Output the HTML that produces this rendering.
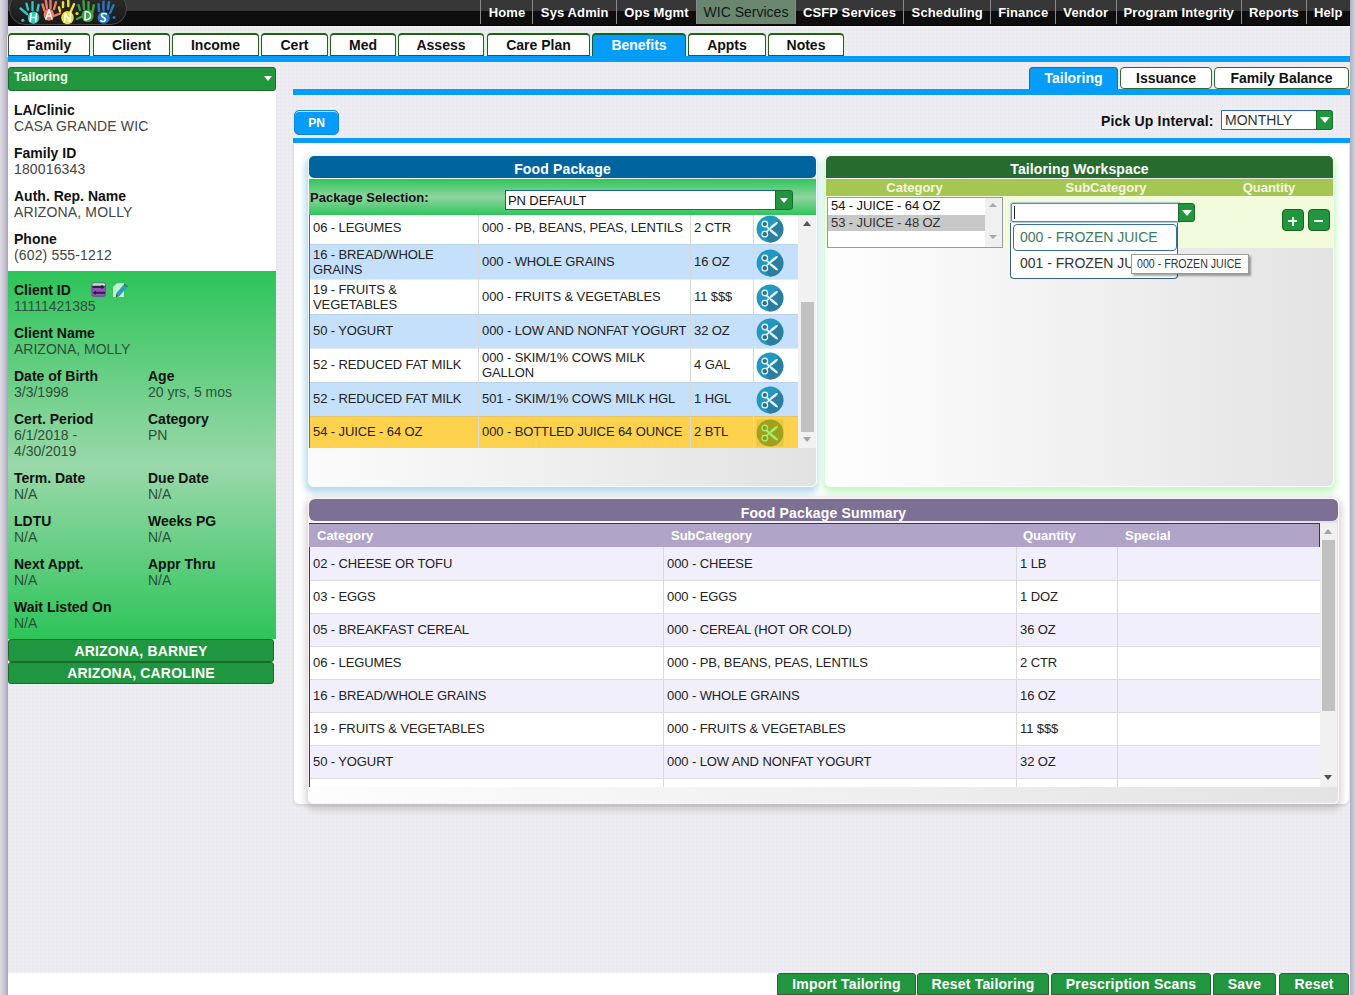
<!DOCTYPE html><html><head><meta charset="utf-8"><style>
html,body{margin:0;padding:0;}
body{width:1356px;height:995px;position:relative;overflow:hidden;background:#ecebf0;font-family:"Liberation Sans",sans-serif;}
.t{position:absolute;white-space:nowrap;}
.r{position:absolute;box-sizing:border-box;}
</style></head><body>
<div class="r" style="left:8px;top:25px;width:1342px;height:948px;background-color:#ebeaf0;background-image:radial-gradient(#f0eff4 0.8px, transparent 1px);background-size:4px 4px;background-position:1px 1px;"></div>
<div class="r" style="left:8px;top:973px;width:1342px;height:22px;background:#fff;"></div>
<div class="r" style="left:0px;top:0px;width:8px;height:995px;background:linear-gradient(to right,#dddbe3 0,#cfccd8 3px,#b9b5c8 6px,#a9a4bb 8px);"></div>
<div class="r" style="left:1350px;top:0px;width:6px;height:995px;background:linear-gradient(to right,#b3afc2 0,#c6c3d2 3px,#d9d7e0 6px);"></div>
<div class="r" style="left:8px;top:0px;width:1342px;height:26px;background:linear-gradient(#373737 0,#373737 11px,#0e0e0e 11px,#0e0e0e 25px,#000 25px);"></div>
<div class="r" style="left:8px;top:26px;width:1342px;height:1px;background:#f8f8fa;"></div>
<div class="r" style="left:9px;top:-8px;width:118px;height:33px;border-radius:16px;border:1px solid #4a4a4a;background:linear-gradient(#2e2e2e,#1a1a1a);"></div>
<svg style="position:absolute;left:0;top:0" width="130" height="25" viewBox="0 0 130 25"><g fill="#30c8c0" stroke="#30c8c0" stroke-linecap="round"><ellipse cx="33.5" cy="17.7" rx="5.7" ry="6.2" stroke="none"/><path d="M20.5 8.5 L27 14" stroke-width="2.4" fill="none"/><path d="M26.5 3.8 L28 9.5" stroke-width="2.4" fill="none"/><path d="M32.5 2.2 L32.5 10" stroke-width="2.4" fill="none"/><path d="M38.5 5 L37.5 10.5" stroke-width="2.4" fill="none"/><circle cx="22.8" cy="20.3" r="1.6" stroke="none"/></g><g fill="#e87a66" stroke="#e87a66" stroke-linecap="round"><ellipse cx="48.9" cy="14.8" rx="5.3" ry="6" stroke="none"/><path d="M42.5 4.5 L44.5 10.5" stroke-width="2.4" fill="none"/><path d="M45.8 0.5 L47 8" stroke-width="2.4" fill="none"/><path d="M50.5 0.5 L50.5 8" stroke-width="2.4" fill="none"/><path d="M56 2.2 L54 9" stroke-width="2.4" fill="none"/><path d="M60.2 13.3 L54 16" stroke-width="2.4" fill="none"/></g><g fill="#f0e030" stroke="#f0e030" stroke-linecap="round"><ellipse cx="67.5" cy="17.7" rx="6.3" ry="6.6" stroke="none"/><path d="M63 2.2 L63 7" stroke-width="2.4" fill="none"/><path d="M68.3 0.8 L68.3 6" stroke-width="2.4" fill="none"/><path d="M74 4.2 L70.5 12" stroke-width="2.4" fill="none"/><path d="M59 7.5 L60 11" stroke-width="2.4" fill="none"/><circle cx="77" cy="13.5" r="1.6" stroke="none"/></g><g fill="#3aa040" stroke="#3aa040" stroke-linecap="round"><ellipse cx="87.6" cy="15.7" rx="6.1" ry="6.3" stroke="none"/><path d="M78.5 5.2 L80 10" stroke-width="2.4" fill="none"/><path d="M83.5 1.2 L84 9" stroke-width="2.4" fill="none"/><path d="M88.5 2.2 L88.5 9" stroke-width="2.4" fill="none"/><path d="M93.8 5.2 L92.5 12" stroke-width="2.4" fill="none"/><path d="M77 19 L81 17" stroke-width="2.4" fill="none"/></g><g fill="#2a78c8" stroke="#2a78c8" stroke-linecap="round"><ellipse cx="103.7" cy="17.7" rx="6.1" ry="6.1" stroke="none"/><path d="M98.5 4.2 L99 11" stroke-width="2.4" fill="none"/><path d="M103.5 1.8 L103.5 10" stroke-width="2.4" fill="none"/><path d="M109 2.2 L108 9" stroke-width="2.4" fill="none"/><path d="M113.5 5.2 L110 13" stroke-width="2.4" fill="none"/><circle cx="114" cy="17.5" r="1.4" stroke="none"/></g><g fill="none" stroke="#f0fffa" stroke-width="1.6" stroke-linecap="round" stroke-linejoin="round"><path d="M31 13.5 L30.3 21.5 M36.5 13.5 L35.8 21.5 M30.7 17.5 L36.2 17.5"/><path d="M45.8 19 L49 10 L52 19 M46.9 16 L51 16"/><path d="M64.5 22 L65.3 13.5 L69.8 21.5 L70.6 13"/><path d="M85.3 11.5 L85 20 Q91 19.5 90.5 15.5 Q90 11.5 85.3 11.5"/><path d="M106.3 14 Q103.5 12.8 101.8 14.2 Q100.8 16 103 17.3 Q106 18.5 105.3 20.5 Q103.5 22.3 100.8 20.8"/></g>
</svg>
<div class="r" style="left:696px;top:0px;width:99px;height:24px;background:#6b866e;"></div>
<div class="r" style="left:480px;top:0px;width:1px;height:24px;background:#8a8a8a;"></div>
<div class="r" style="left:532px;top:0px;width:1px;height:24px;background:#8a8a8a;"></div>
<div class="r" style="left:616px;top:0px;width:1px;height:24px;background:#8a8a8a;"></div>
<div class="r" style="left:696px;top:0px;width:1px;height:24px;background:#8a8a8a;"></div>
<div class="r" style="left:795px;top:0px;width:1px;height:24px;background:#8a8a8a;"></div>
<div class="r" style="left:903px;top:0px;width:1px;height:24px;background:#8a8a8a;"></div>
<div class="r" style="left:990px;top:0px;width:1px;height:24px;background:#8a8a8a;"></div>
<div class="r" style="left:1055px;top:0px;width:1px;height:24px;background:#8a8a8a;"></div>
<div class="r" style="left:1116px;top:0px;width:1px;height:24px;background:#8a8a8a;"></div>
<div class="r" style="left:1241px;top:0px;width:1px;height:24px;background:#8a8a8a;"></div>
<div class="r" style="left:1306px;top:0px;width:1px;height:24px;background:#8a8a8a;"></div>
<div class="t" style="left:481.5px;top:6.00px;font-size:13px;line-height:13px;font-weight:bold;color:#fff;width:51.0px;text-align:center;letter-spacing:0.12px;">Home</div>
<div class="t" style="left:533.5px;top:6.00px;font-size:13px;line-height:13px;font-weight:bold;color:#fff;width:82.5px;text-align:center;letter-spacing:0.12px;">Sys Admin</div>
<div class="t" style="left:617px;top:6.00px;font-size:13px;line-height:13px;font-weight:bold;color:#fff;width:79px;text-align:center;letter-spacing:0.12px;">Ops Mgmt</div>
<div class="t" style="left:697px;top:4.95px;font-size:14px;line-height:14px;color:#0c1a18;width:98px;text-align:center;">WIC Services</div>
<div class="t" style="left:796px;top:6.00px;font-size:13px;line-height:13px;font-weight:bold;color:#fff;width:107px;text-align:center;letter-spacing:0.12px;">CSFP Services</div>
<div class="t" style="left:904px;top:6.00px;font-size:13px;line-height:13px;font-weight:bold;color:#fff;width:86.5px;text-align:center;letter-spacing:0.12px;">Scheduling</div>
<div class="t" style="left:991.5px;top:6.00px;font-size:13px;line-height:13px;font-weight:bold;color:#fff;width:63.5px;text-align:center;letter-spacing:0.12px;">Finance</div>
<div class="t" style="left:1056px;top:6.00px;font-size:13px;line-height:13px;font-weight:bold;color:#fff;width:59.5px;text-align:center;letter-spacing:0.12px;">Vendor</div>
<div class="t" style="left:1116.5px;top:6.00px;font-size:13px;line-height:13px;font-weight:bold;color:#fff;width:124.5px;text-align:center;letter-spacing:0.12px;">Program Integrity</div>
<div class="t" style="left:1242px;top:6.00px;font-size:13px;line-height:13px;font-weight:bold;color:#fff;width:64px;text-align:center;letter-spacing:0.12px;">Reports</div>
<div class="t" style="left:1307px;top:6.00px;font-size:13px;line-height:13px;font-weight:bold;color:#fff;width:42.5px;text-align:center;letter-spacing:0.12px;">Help</div>
<div class="r" style="left:8px;top:33px;width:82px;height:23px;background:#fff;border:1px solid #2d5a22;border-top:2px solid #2d5a22;border-radius:4px 4px 0 0;box-shadow:0 0 0 1px #dcf8dc;"></div>
<div class="t" style="left:8px;top:37.65px;font-size:14px;line-height:14px;font-weight:bold;color:#111;width:82px;text-align:center;">Family</div>
<div class="r" style="left:93px;top:33px;width:77px;height:23px;background:#fff;border:1px solid #2d5a22;border-top:2px solid #2d5a22;border-radius:4px 4px 0 0;box-shadow:0 0 0 1px #dcf8dc;"></div>
<div class="t" style="left:93px;top:37.65px;font-size:14px;line-height:14px;font-weight:bold;color:#111;width:77px;text-align:center;">Client</div>
<div class="r" style="left:172px;top:33px;width:87px;height:23px;background:#fff;border:1px solid #2d5a22;border-top:2px solid #2d5a22;border-radius:4px 4px 0 0;box-shadow:0 0 0 1px #dcf8dc;"></div>
<div class="t" style="left:172px;top:37.65px;font-size:14px;line-height:14px;font-weight:bold;color:#111;width:87px;text-align:center;">Income</div>
<div class="r" style="left:261px;top:33px;width:67px;height:23px;background:#fff;border:1px solid #2d5a22;border-top:2px solid #2d5a22;border-radius:4px 4px 0 0;box-shadow:0 0 0 1px #dcf8dc;"></div>
<div class="t" style="left:261px;top:37.65px;font-size:14px;line-height:14px;font-weight:bold;color:#111;width:67px;text-align:center;">Cert</div>
<div class="r" style="left:330px;top:33px;width:66px;height:23px;background:#fff;border:1px solid #2d5a22;border-top:2px solid #2d5a22;border-radius:4px 4px 0 0;box-shadow:0 0 0 1px #dcf8dc;"></div>
<div class="t" style="left:330px;top:37.65px;font-size:14px;line-height:14px;font-weight:bold;color:#111;width:66px;text-align:center;">Med</div>
<div class="r" style="left:398px;top:33px;width:86px;height:23px;background:#fff;border:1px solid #2d5a22;border-top:2px solid #2d5a22;border-radius:4px 4px 0 0;box-shadow:0 0 0 1px #dcf8dc;"></div>
<div class="t" style="left:398px;top:37.65px;font-size:14px;line-height:14px;font-weight:bold;color:#111;width:86px;text-align:center;">Assess</div>
<div class="r" style="left:487px;top:33px;width:103px;height:23px;background:#fff;border:1px solid #2d5a22;border-top:2px solid #2d5a22;border-radius:4px 4px 0 0;box-shadow:0 0 0 1px #dcf8dc;"></div>
<div class="t" style="left:487px;top:37.65px;font-size:14px;line-height:14px;font-weight:bold;color:#111;width:103px;text-align:center;">Care Plan</div>
<div class="r" style="left:592px;top:33px;width:94px;height:23px;background:#069cf9;border:1px solid #115e3e;border-top:2px solid #115e3e;border-bottom:none;border-radius:4px 4px 0 0;box-shadow:0 0 0 1px #dcf8dc;"></div>
<div class="t" style="left:592px;top:37.65px;font-size:14px;line-height:14px;font-weight:bold;color:#fff;width:94px;text-align:center;">Benefits</div>
<div class="r" style="left:688px;top:33px;width:78px;height:23px;background:#fff;border:1px solid #2d5a22;border-top:2px solid #2d5a22;border-radius:4px 4px 0 0;box-shadow:0 0 0 1px #dcf8dc;"></div>
<div class="t" style="left:688px;top:37.65px;font-size:14px;line-height:14px;font-weight:bold;color:#111;width:78px;text-align:center;">Appts</div>
<div class="r" style="left:768px;top:33px;width:76px;height:23px;background:#fff;border:1px solid #2d5a22;border-top:2px solid #2d5a22;border-radius:4px 4px 0 0;box-shadow:0 0 0 1px #dcf8dc;"></div>
<div class="t" style="left:768px;top:37.65px;font-size:14px;line-height:14px;font-weight:bold;color:#111;width:76px;text-align:center;">Notes</div>
<div class="r" style="left:8px;top:56px;width:1342px;height:6px;background:#069cf9;"></div>
<div class="r" style="left:8px;top:67px;width:268px;height:24px;background:#21963f;border:1px solid #1b6a2a;border-radius:3px;"></div>
<div class="t" style="left:14px;top:70.00px;font-size:13px;line-height:13px;font-weight:bold;color:#eaffea;">Tailoring</div>
<div class="r" style="left:264px;top:76px;width:0;height:0;border-left:4px solid transparent;border-right:4px solid transparent;border-top:5px solid #fff;"></div>
<div class="r" style="left:8px;top:91px;width:268px;height:180px;background:#fff;"></div>
<div class="t" style="left:14px;top:102.95px;font-size:14px;line-height:14px;font-weight:bold;color:#111;">LA/Clinic</div>
<div class="t" style="left:14px;top:118.95px;font-size:14px;line-height:14px;color:#444;letter-spacing:0.15px;">CASA GRANDE WIC</div>
<div class="t" style="left:14px;top:146.05px;font-size:14px;line-height:14px;font-weight:bold;color:#111;">Family ID</div>
<div class="t" style="left:14px;top:162.05px;font-size:14px;line-height:14px;color:#444;letter-spacing:0.15px;">180016343</div>
<div class="t" style="left:14px;top:189.05px;font-size:14px;line-height:14px;font-weight:bold;color:#111;">Auth. Rep. Name</div>
<div class="t" style="left:14px;top:205.05px;font-size:14px;line-height:14px;color:#444;letter-spacing:0.15px;">ARIZONA, MOLLY</div>
<div class="t" style="left:14px;top:232.05px;font-size:14px;line-height:14px;font-weight:bold;color:#111;">Phone</div>
<div class="t" style="left:14px;top:248.05px;font-size:14px;line-height:14px;color:#444;letter-spacing:0.15px;">(602) 555-1212</div>
<div class="r" style="left:8px;top:271px;width:268px;height:368px;background:linear-gradient(#2dc459 0%,#9ad8aa 53%,#2dc459 100%);"></div>
<div class="t" style="left:14px;top:283.15px;font-size:14px;line-height:14px;font-weight:bold;color:#111;">Client ID</div>
<div class="t" style="left:14px;top:299.15px;font-size:14px;line-height:14px;color:#2f4f3a;">11111421385</div>
<div class="t" style="left:14px;top:326.15px;font-size:14px;line-height:14px;font-weight:bold;color:#111;">Client Name</div>
<div class="t" style="left:14px;top:342.15px;font-size:14px;line-height:14px;color:#2f4f3a;">ARIZONA, MOLLY</div>
<div class="t" style="left:14px;top:369.15px;font-size:14px;line-height:14px;font-weight:bold;color:#111;">Date of Birth</div>
<div class="t" style="left:14px;top:385.15px;font-size:14px;line-height:14px;color:#2f4f3a;">3/3/1998</div>
<div class="t" style="left:148px;top:369.15px;font-size:14px;line-height:14px;font-weight:bold;color:#111;">Age</div>
<div class="t" style="left:148px;top:385.15px;font-size:14px;line-height:14px;color:#2f4f3a;">20 yrs, 5 mos</div>
<div class="t" style="left:14px;top:412.15px;font-size:14px;line-height:14px;font-weight:bold;color:#111;">Cert. Period</div>
<div class="t" style="left:14px;top:428.15px;font-size:14px;line-height:14px;color:#2f4f3a;">6/1/2018 -</div>
<div class="t" style="left:148px;top:412.15px;font-size:14px;line-height:14px;font-weight:bold;color:#111;">Category</div>
<div class="t" style="left:148px;top:428.15px;font-size:14px;line-height:14px;color:#2f4f3a;">PN</div>
<div class="t" style="left:14px;top:470.75px;font-size:14px;line-height:14px;font-weight:bold;color:#111;">Term. Date</div>
<div class="t" style="left:14px;top:486.75px;font-size:14px;line-height:14px;color:#2f4f3a;">N/A</div>
<div class="t" style="left:148px;top:470.75px;font-size:14px;line-height:14px;font-weight:bold;color:#111;">Due Date</div>
<div class="t" style="left:148px;top:486.75px;font-size:14px;line-height:14px;color:#2f4f3a;">N/A</div>
<div class="t" style="left:14px;top:513.75px;font-size:14px;line-height:14px;font-weight:bold;color:#111;">LDTU</div>
<div class="t" style="left:14px;top:529.75px;font-size:14px;line-height:14px;color:#2f4f3a;">N/A</div>
<div class="t" style="left:148px;top:513.75px;font-size:14px;line-height:14px;font-weight:bold;color:#111;">Weeks PG</div>
<div class="t" style="left:148px;top:529.75px;font-size:14px;line-height:14px;color:#2f4f3a;">N/A</div>
<div class="t" style="left:14px;top:556.85px;font-size:14px;line-height:14px;font-weight:bold;color:#111;">Next Appt.</div>
<div class="t" style="left:14px;top:572.85px;font-size:14px;line-height:14px;color:#2f4f3a;">N/A</div>
<div class="t" style="left:148px;top:556.85px;font-size:14px;line-height:14px;font-weight:bold;color:#111;">Appr Thru</div>
<div class="t" style="left:148px;top:572.85px;font-size:14px;line-height:14px;color:#2f4f3a;">N/A</div>
<div class="t" style="left:14px;top:599.95px;font-size:14px;line-height:14px;font-weight:bold;color:#111;">Wait Listed On</div>
<div class="t" style="left:14px;top:615.95px;font-size:14px;line-height:14px;color:#2f4f3a;">N/A</div>
<div class="t" style="left:14px;top:443.65px;font-size:14px;line-height:14px;color:#2f4f3a;">4/30/2019</div>
<svg style="position:absolute;left:90px;top:282px" width="40" height="16" viewBox="0 0 40 16">
<rect x="1.8" y="1" width="13.7" height="13.4" rx="2" fill="#9b4cc4" stroke="#5a3a8a" stroke-width="0.6"/>
<path d="M2.2 3.6 V2.8 Q2.2 1.3 3.8 1.3 H13.6 Q15.2 1.3 15.2 2.8 V3.6 Z" fill="#dcd4f2"/>
<path d="M2.5 5 H12.5" stroke="#1c2e2a" stroke-width="2"/><path d="M11.5 2.8 L15 5 L11.5 7.2 Z" fill="#1c2e2a"/>
<path d="M15 10.8 H5" stroke="#1c2e2a" stroke-width="2"/><path d="M6 8.6 L2.5 10.8 L6 13 Z" fill="#1c2e2a"/>
<path d="M23 5 L27 1.2 H34 V15 H23 Z" fill="#c2f3cc"/>
<path d="M27.5 13.2 L35.2 4.2" stroke="#2a9cc4" stroke-width="4.2" stroke-linecap="butt"/>
<path d="M35.2 4.2 L36.3 2.9" stroke="#2a8050" stroke-width="4.2"/>
<path d="M25.8 15.2 L26.3 12 L28.8 14.2 Z" fill="#2a5a3a"/>
</svg>
<div class="r" style="left:8px;top:639px;width:266px;height:23px;background:#1f963f;border:1px solid #1b6a2a;border-radius:3px;"></div>
<div class="t" style="left:8px;top:643.65px;font-size:14px;line-height:14px;font-weight:bold;color:#fff;width:266px;text-align:center;letter-spacing:0.17px;">ARIZONA, BARNEY</div>
<div class="r" style="left:8px;top:662px;width:266px;height:22px;background:#1f963f;border:1px solid #1b6a2a;border-radius:3px;"></div>
<div class="t" style="left:8px;top:665.65px;font-size:14px;line-height:14px;font-weight:bold;color:#fff;width:266px;text-align:center;letter-spacing:0.17px;">ARIZONA, CAROLINE</div>
<div class="r" style="left:1029px;top:67px;width:89px;height:23px;background:#069cf9;border:1px solid #2e7a3a;border-bottom:none;border-radius:4px 4px 0 0;"></div>
<div class="t" style="left:1029px;top:71.15px;font-size:14px;line-height:14px;font-weight:bold;color:#fff;width:89px;text-align:center;">Tailoring</div>
<div class="r" style="left:1120px;top:67px;width:92px;height:22px;background:#fff;border:1px solid #2e6b2e;border-radius:4px;"></div>
<div class="t" style="left:1120px;top:71.15px;font-size:14px;line-height:14px;font-weight:bold;color:#111;width:92px;text-align:center;">Issuance</div>
<div class="r" style="left:1214px;top:67px;width:135px;height:22px;background:#fff;border:1px solid #2e6b2e;border-radius:4px;"></div>
<div class="t" style="left:1214px;top:71.15px;font-size:14px;line-height:14px;font-weight:bold;color:#111;width:135px;text-align:center;">Family Balance</div>
<div class="r" style="left:293px;top:89px;width:1057px;height:6px;background:#069cf9;"></div>
<div class="r" style="left:294px;top:110px;width:45px;height:25px;background:#069cf9;border:1px solid #0d86dd;border-radius:5px;box-shadow:inset 0 1px 0 #bfe3ff;"></div>
<div class="t" style="left:294px;top:116.84px;font-size:12px;line-height:12px;font-weight:bold;color:#fff;width:45px;text-align:center;">PN</div>
<div class="t" style="left:1101px;top:114.15px;font-size:14px;line-height:14px;font-weight:bold;color:#111;letter-spacing:0.17px;">Pick Up Interval:</div>
<div class="r" style="left:1221px;top:110px;width:112px;height:20px;background:#fff;border:1px solid #2a6ab0;border-radius:0 3px 3px 0;"></div>
<div class="r" style="left:1316px;top:110px;width:17px;height:20px;background:#21963f;border:1px solid #1b6a2a;border-radius:0 3px 3px 0;"></div>
<div class="r" style="left:1320px;top:117px;width:0;height:0;border-left:5px solid transparent;border-right:5px solid transparent;border-top:6px solid #fff;"></div>
<div class="t" style="left:1225px;top:113.35px;font-size:14px;line-height:14px;color:#333;">MONTHLY</div>
<div class="r" style="left:293px;top:138px;width:1057px;height:5px;background:#069cf9;"></div>
<div class="r" style="left:293px;top:143px;width:1056px;height:661px;background:#fff;border-left:1px solid #e8e2d4;border-radius:0 0 6px 6px;box-shadow:0 2px 3px rgba(0,0,0,0.08);"></div>
<div class="r" style="left:308px;top:155px;width:509px;height:332px;border-radius:6px;border:1px solid #f4fbff;box-shadow:-1px 4px 6px 2px rgba(175,215,235,0.9);background:linear-gradient(to right,#fbfbfb,#e2e2e2);"></div>
<div class="r" style="left:309px;top:156px;width:507px;height:22px;background:#00659e;border-radius:5px;"></div>
<div class="t" style="left:309px;top:162.15px;font-size:14px;line-height:14px;font-weight:bold;color:#fff;width:507px;text-align:center;letter-spacing:0.15px;">Food Package</div>
<div class="r" style="left:309px;top:179px;width:507px;height:36px;background:linear-gradient(#2fc65b 0%,#8fd4a0 50%,#2fc65b 100%);"></div>
<div class="t" style="left:310px;top:191.00px;font-size:13px;line-height:13px;font-weight:bold;color:#111;">Package Selection:</div>
<div class="r" style="left:505px;top:190px;width:271px;height:20px;background:#fff;border:1px solid #1f5f8f;border-right:none;"></div>
<div class="r" style="left:775px;top:190px;width:18px;height:20px;background:#21963f;border:1px solid #1b6a2a;border-radius:0 3px 3px 0;"></div>
<div class="r" style="left:780px;top:198px;width:0;height:0;border-left:4px solid transparent;border-right:4px solid transparent;border-top:5px solid #fff;"></div>
<div class="t" style="left:508px;top:194.00px;font-size:13px;line-height:13px;letter-spacing:-0.1px;color:#111;">PN DEFAULT</div>
<div class="r" style="left:309px;top:215px;width:489px;height:233px;background:#fff;"></div>
<div class="r" style="left:310px;top:215px;width:488px;height:29px;background:#fff;"></div>
<div class="t" style="left:313px;top:220.60px;font-size:13px;line-height:13px;letter-spacing:-0.1px;color:#222;">06 - LEGUMES</div>
<div class="t" style="left:482px;top:220.60px;font-size:13px;line-height:13px;letter-spacing:-0.1px;color:#222;">000 - PB, BEANS, PEAS, LENTILS</div>
<div class="t" style="left:694px;top:220.60px;font-size:13px;line-height:13px;letter-spacing:-0.1px;color:#222;">2 CTR</div>
<svg style="position:absolute;left:755.5px;top:214.6px" width="28" height="28" viewBox="0 0 28 28"><defs><clipPath id="cc"><circle cx="14" cy="14" r="13.4"/></clipPath></defs><circle cx="14" cy="14" r="13.4" fill="#2297c0"/><path d="M14 12 L22 5 L40 23 L20 40 L9 21 Z" fill="#2b7e9e" clip-path="url(#cc)"/><g fill="#dff2f6"><circle cx="8.8" cy="9" r="3.4"/><circle cx="8.8" cy="19.2" r="3.4"/><ellipse cx="17.6" cy="10.5" rx="5.4" ry="1.35" transform="rotate(-39.6 17.6 10.5)"/><ellipse cx="17.6" cy="17.7" rx="5.4" ry="1.35" transform="rotate(39.6 17.6 17.7)"/></g><path d="M10 11 L14 14.6 M10 17.2 L14 13.6" stroke="#dff2f6" stroke-width="1.7"/><g fill="#2a6e86"><circle cx="8.8" cy="9" r="2.1"/><circle cx="8.8" cy="19.2" r="2.1"/></g></svg>
<div class="r" style="left:310px;top:244px;width:488px;height:35px;background:#c5e0fa;"></div>
<div class="t" style="left:313px;top:247.50px;font-size:13px;line-height:13px;letter-spacing:-0.1px;color:#222;">16 - BREAD/WHOLE</div>
<div class="t" style="left:313px;top:262.50px;font-size:13px;line-height:13px;letter-spacing:-0.1px;color:#222;">GRAINS</div>
<div class="t" style="left:482px;top:254.80px;font-size:13px;line-height:13px;letter-spacing:-0.1px;color:#222;">000 - WHOLE GRAINS</div>
<div class="t" style="left:694px;top:254.80px;font-size:13px;line-height:13px;letter-spacing:-0.1px;color:#222;">16 OZ</div>
<svg style="position:absolute;left:755.5px;top:248.5px" width="28" height="28" viewBox="0 0 28 28"><defs><clipPath id="cc"><circle cx="14" cy="14" r="13.4"/></clipPath></defs><circle cx="14" cy="14" r="13.4" fill="#2297c0"/><path d="M14 12 L22 5 L40 23 L20 40 L9 21 Z" fill="#2b7e9e" clip-path="url(#cc)"/><g fill="#dff2f6"><circle cx="8.8" cy="9" r="3.4"/><circle cx="8.8" cy="19.2" r="3.4"/><ellipse cx="17.6" cy="10.5" rx="5.4" ry="1.35" transform="rotate(-39.6 17.6 10.5)"/><ellipse cx="17.6" cy="17.7" rx="5.4" ry="1.35" transform="rotate(39.6 17.6 17.7)"/></g><path d="M10 11 L14 14.6 M10 17.2 L14 13.6" stroke="#dff2f6" stroke-width="1.7"/><g fill="#2a6e86"><circle cx="8.8" cy="9" r="2.1"/><circle cx="8.8" cy="19.2" r="2.1"/></g></svg>
<div class="r" style="left:310px;top:279px;width:488px;height:35px;background:#fff;"></div>
<div class="t" style="left:313px;top:282.50px;font-size:13px;line-height:13px;letter-spacing:-0.1px;color:#222;">19 - FRUITS &amp;</div>
<div class="t" style="left:313px;top:297.50px;font-size:13px;line-height:13px;letter-spacing:-0.1px;color:#222;">VEGETABLES</div>
<div class="t" style="left:482px;top:289.80px;font-size:13px;line-height:13px;letter-spacing:-0.1px;color:#222;">000 - FRUITS &amp; VEGETABLES</div>
<div class="t" style="left:694px;top:289.80px;font-size:13px;line-height:13px;letter-spacing:-0.1px;color:#222;">11 $$$</div>
<svg style="position:absolute;left:755.5px;top:283.5px" width="28" height="28" viewBox="0 0 28 28"><defs><clipPath id="cc"><circle cx="14" cy="14" r="13.4"/></clipPath></defs><circle cx="14" cy="14" r="13.4" fill="#2297c0"/><path d="M14 12 L22 5 L40 23 L20 40 L9 21 Z" fill="#2b7e9e" clip-path="url(#cc)"/><g fill="#dff2f6"><circle cx="8.8" cy="9" r="3.4"/><circle cx="8.8" cy="19.2" r="3.4"/><ellipse cx="17.6" cy="10.5" rx="5.4" ry="1.35" transform="rotate(-39.6 17.6 10.5)"/><ellipse cx="17.6" cy="17.7" rx="5.4" ry="1.35" transform="rotate(39.6 17.6 17.7)"/></g><path d="M10 11 L14 14.6 M10 17.2 L14 13.6" stroke="#dff2f6" stroke-width="1.7"/><g fill="#2a6e86"><circle cx="8.8" cy="9" r="2.1"/><circle cx="8.8" cy="19.2" r="2.1"/></g></svg>
<div class="r" style="left:310px;top:314px;width:488px;height:34px;background:#c5e0fa;"></div>
<div class="t" style="left:313px;top:324.30px;font-size:13px;line-height:13px;letter-spacing:-0.1px;color:#222;">50 - YOGURT</div>
<div class="t" style="left:482px;top:324.30px;font-size:13px;line-height:13px;letter-spacing:-0.1px;color:#222;">000 - LOW AND NONFAT YOGURT</div>
<div class="t" style="left:694px;top:324.30px;font-size:13px;line-height:13px;letter-spacing:-0.1px;color:#222;">32 OZ</div>
<svg style="position:absolute;left:755.5px;top:318.0px" width="28" height="28" viewBox="0 0 28 28"><defs><clipPath id="cc"><circle cx="14" cy="14" r="13.4"/></clipPath></defs><circle cx="14" cy="14" r="13.4" fill="#2297c0"/><path d="M14 12 L22 5 L40 23 L20 40 L9 21 Z" fill="#2b7e9e" clip-path="url(#cc)"/><g fill="#dff2f6"><circle cx="8.8" cy="9" r="3.4"/><circle cx="8.8" cy="19.2" r="3.4"/><ellipse cx="17.6" cy="10.5" rx="5.4" ry="1.35" transform="rotate(-39.6 17.6 10.5)"/><ellipse cx="17.6" cy="17.7" rx="5.4" ry="1.35" transform="rotate(39.6 17.6 17.7)"/></g><path d="M10 11 L14 14.6 M10 17.2 L14 13.6" stroke="#dff2f6" stroke-width="1.7"/><g fill="#2a6e86"><circle cx="8.8" cy="9" r="2.1"/><circle cx="8.8" cy="19.2" r="2.1"/></g></svg>
<div class="r" style="left:310px;top:348px;width:488px;height:34px;background:#fff;"></div>
<div class="t" style="left:313px;top:358.30px;font-size:13px;line-height:13px;letter-spacing:-0.1px;color:#222;">52 - REDUCED FAT MILK</div>
<div class="t" style="left:482px;top:351.00px;font-size:13px;line-height:13px;letter-spacing:-0.1px;color:#222;">000 - SKIM/1% COWS MILK</div>
<div class="t" style="left:482px;top:366.00px;font-size:13px;line-height:13px;letter-spacing:-0.1px;color:#222;">GALLON</div>
<div class="t" style="left:694px;top:358.30px;font-size:13px;line-height:13px;letter-spacing:-0.1px;color:#222;">4 GAL</div>
<svg style="position:absolute;left:755.5px;top:352.0px" width="28" height="28" viewBox="0 0 28 28"><defs><clipPath id="cc"><circle cx="14" cy="14" r="13.4"/></clipPath></defs><circle cx="14" cy="14" r="13.4" fill="#2297c0"/><path d="M14 12 L22 5 L40 23 L20 40 L9 21 Z" fill="#2b7e9e" clip-path="url(#cc)"/><g fill="#dff2f6"><circle cx="8.8" cy="9" r="3.4"/><circle cx="8.8" cy="19.2" r="3.4"/><ellipse cx="17.6" cy="10.5" rx="5.4" ry="1.35" transform="rotate(-39.6 17.6 10.5)"/><ellipse cx="17.6" cy="17.7" rx="5.4" ry="1.35" transform="rotate(39.6 17.6 17.7)"/></g><path d="M10 11 L14 14.6 M10 17.2 L14 13.6" stroke="#dff2f6" stroke-width="1.7"/><g fill="#2a6e86"><circle cx="8.8" cy="9" r="2.1"/><circle cx="8.8" cy="19.2" r="2.1"/></g></svg>
<div class="r" style="left:310px;top:382px;width:488px;height:34px;background:#c5e0fa;"></div>
<div class="t" style="left:313px;top:392.30px;font-size:13px;line-height:13px;letter-spacing:-0.1px;color:#222;">52 - REDUCED FAT MILK</div>
<div class="t" style="left:482px;top:392.30px;font-size:13px;line-height:13px;letter-spacing:-0.1px;color:#222;">501 - SKIM/1% COWS MILK HGL</div>
<div class="t" style="left:694px;top:392.30px;font-size:13px;line-height:13px;letter-spacing:-0.1px;color:#222;">1 HGL</div>
<svg style="position:absolute;left:755.5px;top:386.0px" width="28" height="28" viewBox="0 0 28 28"><defs><clipPath id="cc"><circle cx="14" cy="14" r="13.4"/></clipPath></defs><circle cx="14" cy="14" r="13.4" fill="#2297c0"/><path d="M14 12 L22 5 L40 23 L20 40 L9 21 Z" fill="#2b7e9e" clip-path="url(#cc)"/><g fill="#dff2f6"><circle cx="8.8" cy="9" r="3.4"/><circle cx="8.8" cy="19.2" r="3.4"/><ellipse cx="17.6" cy="10.5" rx="5.4" ry="1.35" transform="rotate(-39.6 17.6 10.5)"/><ellipse cx="17.6" cy="17.7" rx="5.4" ry="1.35" transform="rotate(39.6 17.6 17.7)"/></g><path d="M10 11 L14 14.6 M10 17.2 L14 13.6" stroke="#dff2f6" stroke-width="1.7"/><g fill="#2a6e86"><circle cx="8.8" cy="9" r="2.1"/><circle cx="8.8" cy="19.2" r="2.1"/></g></svg>
<div class="r" style="left:310px;top:416px;width:488px;height:32px;background:#ffd24d;"></div>
<div class="t" style="left:313px;top:425.30px;font-size:13px;line-height:13px;letter-spacing:-0.1px;color:#222;">54 - JUICE - 64 OZ</div>
<div class="t" style="left:482px;top:425.30px;font-size:13px;line-height:13px;letter-spacing:-0.1px;color:#222;">000 - BOTTLED JUICE 64 OUNCE</div>
<div class="t" style="left:694px;top:425.30px;font-size:13px;line-height:13px;letter-spacing:-0.1px;color:#222;">2 BTL</div>
<svg style="position:absolute;left:755.5px;top:419.0px" width="28" height="28" viewBox="0 0 28 28"><rect x="0.5" y="0.5" width="27" height="27" fill="#e8c63e"/><circle cx="14" cy="14" r="13.4" fill="#9fa01c"/><g fill="#a0f070"><circle cx="8.8" cy="9" r="3.4"/><circle cx="8.8" cy="19.2" r="3.4"/><ellipse cx="17.6" cy="10.5" rx="5.4" ry="1.35" transform="rotate(-39.6 17.6 10.5)"/><ellipse cx="17.6" cy="17.7" rx="5.4" ry="1.35" transform="rotate(39.6 17.6 17.7)"/></g><path d="M10 11 L14 14.6 M10 17.2 L14 13.6" stroke="#a0f070" stroke-width="1.7"/><g fill="#8f9a20"><circle cx="8.8" cy="9" r="2.1"/><circle cx="8.8" cy="19.2" r="2.1"/></g></svg>
<div class="r" style="left:310px;top:244px;width:488px;height:1px;background:rgba(150,165,185,0.25);"></div>
<div class="r" style="left:310px;top:279px;width:488px;height:1px;background:rgba(150,165,185,0.25);"></div>
<div class="r" style="left:310px;top:314px;width:488px;height:1px;background:rgba(150,165,185,0.25);"></div>
<div class="r" style="left:310px;top:348px;width:488px;height:1px;background:rgba(150,165,185,0.25);"></div>
<div class="r" style="left:310px;top:382px;width:488px;height:1px;background:rgba(150,165,185,0.25);"></div>
<div class="r" style="left:310px;top:416px;width:488px;height:1px;background:rgba(150,165,185,0.25);"></div>
<div class="r" style="left:478px;top:215px;width:1px;height:233px;background:#d8d8d8;"></div>
<div class="r" style="left:690px;top:215px;width:1px;height:233px;background:#d8d8d8;"></div>
<div class="r" style="left:753px;top:215px;width:1px;height:233px;background:#d8d8d8;"></div>
<div class="r" style="left:309px;top:215px;width:1px;height:233px;background:#5a6a8a;"></div>
<div class="r" style="left:798px;top:215px;width:18px;height:233px;background:#f1f1f1;"></div>
<div class="r" style="left:801px;top:302px;width:13px;height:130px;background:#c1c1c1;"></div>
<div class="r" style="left:803px;top:221px;width:0;height:0;border-left:4px solid transparent;border-right:4px solid transparent;border-bottom:5px solid #555;"></div>
<div class="r" style="left:803px;top:437px;width:0;height:0;border-left:4px solid transparent;border-right:4px solid transparent;border-top:5px solid #a3a3a3;"></div>
<div class="r" style="left:825px;top:155px;width:509px;height:332px;border-radius:6px;border:1px solid #fbfffb;box-shadow:0 4px 6px 2px rgba(195,248,195,0.95);background:linear-gradient(to right,#fefefe,#e3e3e3);"></div>
<div class="r" style="left:826px;top:156px;width:507px;height:22px;background:#276b2f;border-radius:5px 5px 0 0;"></div>
<div class="t" style="left:826px;top:162.15px;font-size:14px;line-height:14px;font-weight:bold;color:#fff;width:507px;text-align:center;letter-spacing:0.1px;">Tailoring Workspace</div>
<div class="r" style="left:826px;top:179px;width:507px;height:17px;background:#a6c653;"></div>
<div class="t" style="left:826px;top:181.00px;font-size:13px;line-height:13px;font-weight:bold;color:#f4f8e0;width:177px;text-align:center;">Category</div>
<div class="t" style="left:1005px;top:181.00px;font-size:13px;line-height:13px;font-weight:bold;color:#f4f8e0;width:202px;text-align:center;">SubCategory</div>
<div class="t" style="left:1205px;top:181.00px;font-size:13px;line-height:13px;font-weight:bold;color:#f4f8e0;width:128px;text-align:center;">Quantity</div>
<div class="r" style="left:826px;top:196px;width:507px;height:52px;background:#f2fbdc;"></div>
<div class="r" style="left:827px;top:197px;width:176px;height:51px;background:#fff;border:1px solid #9a9a9a;"></div>
<div class="r" style="left:985px;top:198px;width:17px;height:49px;background:#f0f0f0;"></div>
<div class="r" style="left:828px;top:215px;width:157px;height:16px;background:#c8c8c8;"></div>
<div class="t" style="left:831px;top:199.00px;font-size:13px;line-height:13px;letter-spacing:-0.1px;color:#111;">54 - JUICE - 64 OZ</div>
<div class="t" style="left:831px;top:216.00px;font-size:13px;line-height:13px;letter-spacing:-0.1px;color:#333;">53 - JUICE - 48 OZ</div>
<div class="r" style="left:989px;top:203px;width:0;height:0;border-left:4px solid transparent;border-right:4px solid transparent;border-bottom:4px solid #a8a8a8;"></div>
<div class="r" style="left:989px;top:235px;width:0;height:0;border-left:4px solid transparent;border-right:4px solid transparent;border-top:4px solid #a8a8a8;"></div>
<div class="r" style="left:1011px;top:203px;width:168px;height:19px;background:#fff;border:1.5px solid #4a8ad0;border-radius:2px 0 0 2px;box-shadow:0 0 1px 1px rgba(90,150,220,0.5);"></div>
<div class="r" style="left:1014px;top:206px;width:1px;height:13px;background:#222;"></div>
<div class="r" style="left:1178px;top:203px;width:17px;height:19px;background:#21963f;border:1px solid #1b6a2a;border-radius:0 3px 3px 0;"></div>
<div class="r" style="left:1182px;top:210px;width:0;height:0;border-left:5px solid transparent;border-right:5px solid transparent;border-top:6px solid #fff;"></div>
<div class="r" style="left:1010px;top:223px;width:168px;height:56px;background:#fff;border:1px solid #3a5f8a;border-top:none;border-radius:0 0 4px 4px;"></div>
<div class="r" style="left:1013px;top:224px;width:164px;height:27px;background:#fff;border:1.5px solid #3a6e9e;border-radius:4px;"></div>
<div class="t" style="left:1020px;top:230.35px;font-size:14px;line-height:14px;color:#3b7a5e;">000 - FROZEN JUICE</div>
<div class="t" style="left:1020px;top:256.15px;font-size:14px;line-height:14px;color:#333;">001 - FROZEN JUICE</div>
<div class="r" style="left:1131px;top:254px;width:118px;height:20px;background:#fff;border:1px solid #9a9a9a;box-shadow:2px 2px 2px rgba(0,0,0,0.35);"></div>
<div class="t" style="left:1137px;top:257.84px;font-size:12px;line-height:12px;color:#333;transform:scaleX(0.885);transform-origin:0 0;">000 - FROZEN JUICE</div>
<div class="r" style="left:1282px;top:209px;width:22px;height:22px;background:#21963f;border:1.5px solid #1a6020;border-radius:4px;"></div>
<div class="r" style="left:1308px;top:209px;width:22px;height:22px;background:#21963f;border:1.5px solid #1a6020;border-radius:4px;"></div>
<div class="r" style="left:1288px;top:220.4px;width:9px;height:2px;background:#eafff0;"></div>
<div class="r" style="left:1291.5px;top:217px;width:2px;height:9px;background:#eafff0;"></div>
<div class="r" style="left:1314px;top:220.4px;width:9.2px;height:2px;background:#eafff0;"></div>
<div class="r" style="left:308px;top:498px;width:1031px;height:306px;border-radius:6px;border:1px solid #fff4f8;box-shadow:0 3px 6px 3px rgba(110,90,90,0.24);background:linear-gradient(to right,#fdfdfd,#e3e3e3);"></div>
<div class="r" style="left:309px;top:499px;width:1029px;height:21.5px;background:#7d7095;border-radius:6px;"></div>
<div class="t" style="left:309px;top:505.65px;font-size:14px;line-height:14px;font-weight:bold;color:#fff;width:1029px;text-align:center;letter-spacing:0.15px;">Food Package Summary</div>
<div class="r" style="left:309px;top:523px;width:1011px;height:24px;background:#b0a4c8;border-top:1px solid #2e3a5e;border-right:1px solid #2e3a5e;"></div>
<div class="t" style="left:317px;top:529.00px;font-size:13px;line-height:13px;font-weight:bold;color:#fff;">Category</div>
<div class="t" style="left:671px;top:529.00px;font-size:13px;line-height:13px;font-weight:bold;color:#fff;">SubCategory</div>
<div class="t" style="left:1023px;top:529.00px;font-size:13px;line-height:13px;font-weight:bold;color:#fff;">Quantity</div>
<div class="t" style="left:1125px;top:529.00px;font-size:13px;line-height:13px;font-weight:bold;color:#fff;">Special</div>
<div class="r" style="left:309px;top:547px;width:1011px;height:240px;background:#fff;"></div>
<div class="r" style="left:310px;top:547px;width:1010px;height:33px;background:#f0effb;"></div>
<div class="t" style="left:313px;top:556.50px;font-size:13px;line-height:13px;letter-spacing:-0.1px;color:#222;">02 - CHEESE OR TOFU</div>
<div class="t" style="left:667px;top:556.50px;font-size:13px;line-height:13px;letter-spacing:-0.1px;color:#222;">000 - CHEESE</div>
<div class="t" style="left:1020px;top:556.50px;font-size:13px;line-height:13px;letter-spacing:-0.1px;color:#222;">1 LB</div>
<div class="r" style="left:310px;top:580px;width:1010px;height:33px;background:#fff;"></div>
<div class="t" style="left:313px;top:589.50px;font-size:13px;line-height:13px;letter-spacing:-0.1px;color:#222;">03 - EGGS</div>
<div class="t" style="left:667px;top:589.50px;font-size:13px;line-height:13px;letter-spacing:-0.1px;color:#222;">000 - EGGS</div>
<div class="t" style="left:1020px;top:589.50px;font-size:13px;line-height:13px;letter-spacing:-0.1px;color:#222;">1 DOZ</div>
<div class="r" style="left:310px;top:613px;width:1010px;height:33px;background:#f0effb;"></div>
<div class="t" style="left:313px;top:622.50px;font-size:13px;line-height:13px;letter-spacing:-0.1px;color:#222;">05 - BREAKFAST CEREAL</div>
<div class="t" style="left:667px;top:622.50px;font-size:13px;line-height:13px;letter-spacing:-0.1px;color:#222;">000 - CEREAL (HOT OR COLD)</div>
<div class="t" style="left:1020px;top:622.50px;font-size:13px;line-height:13px;letter-spacing:-0.1px;color:#222;">36 OZ</div>
<div class="r" style="left:310px;top:646px;width:1010px;height:33px;background:#fff;"></div>
<div class="t" style="left:313px;top:655.50px;font-size:13px;line-height:13px;letter-spacing:-0.1px;color:#222;">06 - LEGUMES</div>
<div class="t" style="left:667px;top:655.50px;font-size:13px;line-height:13px;letter-spacing:-0.1px;color:#222;">000 - PB, BEANS, PEAS, LENTILS</div>
<div class="t" style="left:1020px;top:655.50px;font-size:13px;line-height:13px;letter-spacing:-0.1px;color:#222;">2 CTR</div>
<div class="r" style="left:310px;top:679px;width:1010px;height:33px;background:#f0effb;"></div>
<div class="t" style="left:313px;top:688.50px;font-size:13px;line-height:13px;letter-spacing:-0.1px;color:#222;">16 - BREAD/WHOLE GRAINS</div>
<div class="t" style="left:667px;top:688.50px;font-size:13px;line-height:13px;letter-spacing:-0.1px;color:#222;">000 - WHOLE GRAINS</div>
<div class="t" style="left:1020px;top:688.50px;font-size:13px;line-height:13px;letter-spacing:-0.1px;color:#222;">16 OZ</div>
<div class="r" style="left:310px;top:712px;width:1010px;height:33px;background:#fff;"></div>
<div class="t" style="left:313px;top:721.50px;font-size:13px;line-height:13px;letter-spacing:-0.1px;color:#222;">19 - FRUITS &amp; VEGETABLES</div>
<div class="t" style="left:667px;top:721.50px;font-size:13px;line-height:13px;letter-spacing:-0.1px;color:#222;">000 - FRUITS &amp; VEGETABLES</div>
<div class="t" style="left:1020px;top:721.50px;font-size:13px;line-height:13px;letter-spacing:-0.1px;color:#222;">11 $$$</div>
<div class="r" style="left:310px;top:745px;width:1010px;height:33px;background:#f0effb;"></div>
<div class="t" style="left:313px;top:754.50px;font-size:13px;line-height:13px;letter-spacing:-0.1px;color:#222;">50 - YOGURT</div>
<div class="t" style="left:667px;top:754.50px;font-size:13px;line-height:13px;letter-spacing:-0.1px;color:#222;">000 - LOW AND NONFAT YOGURT</div>
<div class="t" style="left:1020px;top:754.50px;font-size:13px;line-height:13px;letter-spacing:-0.1px;color:#222;">32 OZ</div>
<div class="r" style="left:310px;top:778px;width:1010px;height:9px;background:#fff;"></div>
<div class="r" style="left:310px;top:580px;width:1010px;height:1px;background:#dcdcdc;"></div>
<div class="r" style="left:310px;top:613px;width:1010px;height:1px;background:#dcdcdc;"></div>
<div class="r" style="left:310px;top:646px;width:1010px;height:1px;background:#dcdcdc;"></div>
<div class="r" style="left:310px;top:679px;width:1010px;height:1px;background:#dcdcdc;"></div>
<div class="r" style="left:310px;top:712px;width:1010px;height:1px;background:#dcdcdc;"></div>
<div class="r" style="left:310px;top:745px;width:1010px;height:1px;background:#dcdcdc;"></div>
<div class="r" style="left:310px;top:778px;width:1010px;height:1px;background:#dcdcdc;"></div>
<div class="r" style="left:663px;top:547px;width:1px;height:240px;background:#dadada;"></div>
<div class="r" style="left:1016px;top:547px;width:1px;height:240px;background:#dadada;"></div>
<div class="r" style="left:1117px;top:547px;width:1px;height:240px;background:#dadada;"></div>
<div class="r" style="left:309px;top:547px;width:1px;height:240px;background:#2e3a5e;"></div>
<div class="r" style="left:1320px;top:523px;width:17px;height:264px;background:#f0f0f0;"></div>
<div class="r" style="left:1322px;top:540px;width:13px;height:171px;background:#c1c1c1;"></div>
<div class="r" style="left:1324px;top:529px;width:0;height:0;border-left:4px solid transparent;border-right:4px solid transparent;border-bottom:5px solid #a3a3a3;"></div>
<div class="r" style="left:1324px;top:775px;width:0;height:0;border-left:4px solid transparent;border-right:4px solid transparent;border-top:5px solid #505050;"></div>
<div class="r" style="left:777px;top:973px;width:139px;height:22px;background:#21963f;border:1px solid #1b6a2a;border-radius:3px 3px 0 0;"></div>
<div class="t" style="left:777px;top:977.15px;font-size:14px;line-height:14px;font-weight:bold;color:#fff;width:139px;text-align:center;letter-spacing:0.2px;">Import Tailoring</div>
<div class="r" style="left:917px;top:973px;width:132px;height:22px;background:#21963f;border:1px solid #1b6a2a;border-radius:3px 3px 0 0;"></div>
<div class="t" style="left:917px;top:977.15px;font-size:14px;line-height:14px;font-weight:bold;color:#fff;width:132px;text-align:center;letter-spacing:0.2px;">Reset Tailoring</div>
<div class="r" style="left:1051px;top:973px;width:160px;height:22px;background:#21963f;border:1px solid #1b6a2a;border-radius:3px 3px 0 0;"></div>
<div class="t" style="left:1051px;top:977.15px;font-size:14px;line-height:14px;font-weight:bold;color:#fff;width:160px;text-align:center;letter-spacing:0.2px;">Prescription Scans</div>
<div class="r" style="left:1213px;top:973px;width:63px;height:22px;background:#21963f;border:1px solid #1b6a2a;border-radius:3px 3px 0 0;"></div>
<div class="t" style="left:1213px;top:977.15px;font-size:14px;line-height:14px;font-weight:bold;color:#fff;width:63px;text-align:center;letter-spacing:0.2px;">Save</div>
<div class="r" style="left:1279px;top:973px;width:70px;height:22px;background:#21963f;border:1px solid #1b6a2a;border-radius:3px 3px 0 0;"></div>
<div class="t" style="left:1279px;top:977.15px;font-size:14px;line-height:14px;font-weight:bold;color:#fff;width:70px;text-align:center;letter-spacing:0.2px;">Reset</div>
</body></html>
